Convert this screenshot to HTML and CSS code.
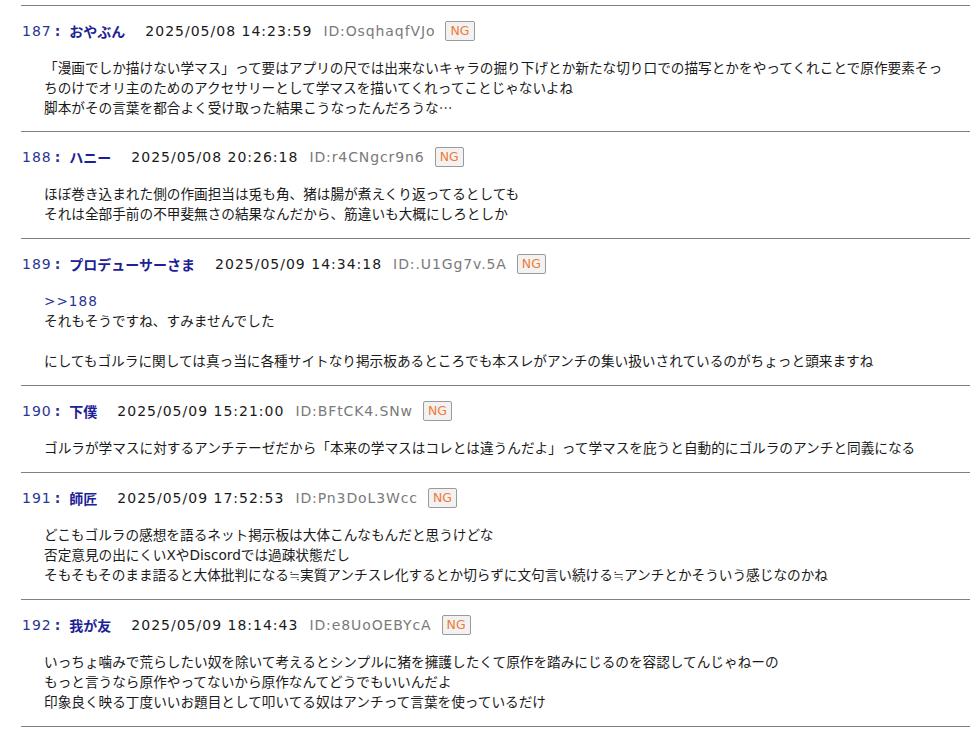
FILE: index.html
```html
<!DOCTYPE html>
<html lang="ja">
<head>
<meta charset="utf-8">
<title>thread</title>
<link rel="stylesheet" href="styles.css">
</head>
<body>
<div class="thread">
  <article class="post">
    <div class="head"><span class="num">187</span><span class="colon">:</span><span class="name">おやぶん</span><span class="date">2025/05/08 14:23:59</span><span class="uid">ID:OsqhaqfVJo</span><span class="ng">NG</span></div>
    <div class="body">「漫画でしか描けない学マス」って要はアプリの尺では出来ないキャラの掘り下げとか新たな切り口での描写とかをやってくれことで原作要素そっ<br>ちのけでオリ主のためのアクセサリーとして学マスを描いてくれってことじゃないよね<br>脚本がその言葉を都合よく受け取った結果こうなったんだろうな…</div>
  </article>
  <article class="post">
    <div class="head"><span class="num">188</span><span class="colon">:</span><span class="name">ハニー</span><span class="date">2025/05/08 20:26:18</span><span class="uid">ID:r4CNgcr9n6</span><span class="ng">NG</span></div>
    <div class="body">ほぼ巻き込まれた側の作画担当は兎も角、猪は腸が煮えくり返ってるとしても<br>それは全部手前の不甲斐無さの結果なんだから、筋違いも大概にしろとしか</div>
  </article>
  <article class="post">
    <div class="head"><span class="num">189</span><span class="colon">:</span><span class="name">プロデューサーさま</span><span class="date">2025/05/09 14:34:18</span><span class="uid">ID:.U1Gg7v.5A</span><span class="ng">NG</span></div>
    <div class="body"><span class="anchor">&gt;&gt;188</span><br>それもそうですね、すみませんでした<br><br>にしてもゴルラに関しては真っ当に各種サイトなり掲示板あるところでも本スレがアンチの集い扱いされているのがちょっと頭来ますね</div>
  </article>
  <article class="post">
    <div class="head"><span class="num">190</span><span class="colon">:</span><span class="name">下僕</span><span class="date">2025/05/09 15:21:00</span><span class="uid">ID:BFtCK4.SNw</span><span class="ng">NG</span></div>
    <div class="body">ゴルラが学マスに対するアンチテーゼだから「本来の学マスはコレとは違うんだよ」って学マスを庇うと自動的にゴルラのアンチと同義になる</div>
  </article>
  <article class="post">
    <div class="head"><span class="num">191</span><span class="colon">:</span><span class="name">師匠</span><span class="date">2025/05/09 17:52:53</span><span class="uid">ID:Pn3DoL3Wcc</span><span class="ng">NG</span></div>
    <div class="body">どこもゴルラの感想を語るネット掲示板は大体こんなもんだと思うけどな<br>否定意見の出にくい<span class="lat">X</span>や<span class="lat">Discord</span>では過疎状態だし<br>そもそもそのまま語ると大体批判になる≒実質アンチスレ化するとか切らずに文句言い続ける≒アンチとかそういう感じなのかね</div>
  </article>
  <article class="post">
    <div class="head"><span class="num">192</span><span class="colon">:</span><span class="name">我が友</span><span class="date">2025/05/09 18:14:43</span><span class="uid">ID:e8UoOEBYcA</span><span class="ng">NG</span></div>
    <div class="body">いっちょ噛みで荒らしたい奴を除いて考えるとシンプルに猪を擁護したくて原作を踏みにじるのを容認してんじゃねーの<br>もっと言うなら原作やってないから原作なんてどうでもいいんだよ<br>印象良く映る丁度いいお題目として叩いてる奴はアンチって言葉を使っているだけ</div>
  </article>
</div>
</body>
</html>
```
FILE: styles.css
```css
html, body {
  margin: 0;
  padding: 0;
  background: #ffffff;
}

body {
  font-family: "Noto Sans CJK JP", sans-serif;
  font-size: 13.65px;
  color: #1a1a1a;
}

.thread {
  margin-left: 21px;
  width: 949px;
  padding-top: 5px;
  border-bottom: 1px solid #808080;
}

.post {
  border-top: 1px solid #808080;
  padding: 15px 0 15px 0;
}

.post:first-child {
  padding-bottom: 14px;
}

.head {
  display: flex;
  align-items: center;
  height: 20px;
  line-height: 20px;
  white-space: nowrap;
  padding-left: 1px;
  font-size: 14px;
}

.num {
  font-family: "DejaVu Sans", sans-serif;
  color: #2b3595;
  letter-spacing: 1px;
}

.colon {
  font-family: "DejaVu Sans", sans-serif;
  color: #2b3595;
  font-weight: bold;
  margin-left: 3px;
  margin-right: 9px;
}

.name {
  color: #1c2296;
  font-weight: bold;
  margin-right: 20px;
}

.date {
  font-family: "DejaVu Sans", sans-serif;
  color: #1a1a1a;
  letter-spacing: 1px;
  margin-right: 11px;
}

.uid {
  font-family: "DejaVu Sans", sans-serif;
  color: #7a7a7a;
  letter-spacing: 0.9px;
  margin-right: 10px;
}

.ng {
  display: inline-block;
  box-sizing: border-box;
  height: 20px;
  line-height: 18px;
  padding: 0 4px;
  border: 1px solid #9a9a9a;
  border-radius: 2px;
  background: #f2f2f2;
  color: #f07a36;
  font-family: "DejaVu Sans", sans-serif;
  font-size: 12.5px;
}

.body {
  margin-top: 16px;
  padding-left: 23px;
  line-height: 20px;
  color: #1a1a1a;
}

.anchor {
  font-family: "DejaVu Sans", sans-serif;
  color: #2b3595;
  letter-spacing: 1px;
  line-height: 14px;
}

.lat {
  font-family: "DejaVu Sans", sans-serif;
  line-height: 14px;
}
```
